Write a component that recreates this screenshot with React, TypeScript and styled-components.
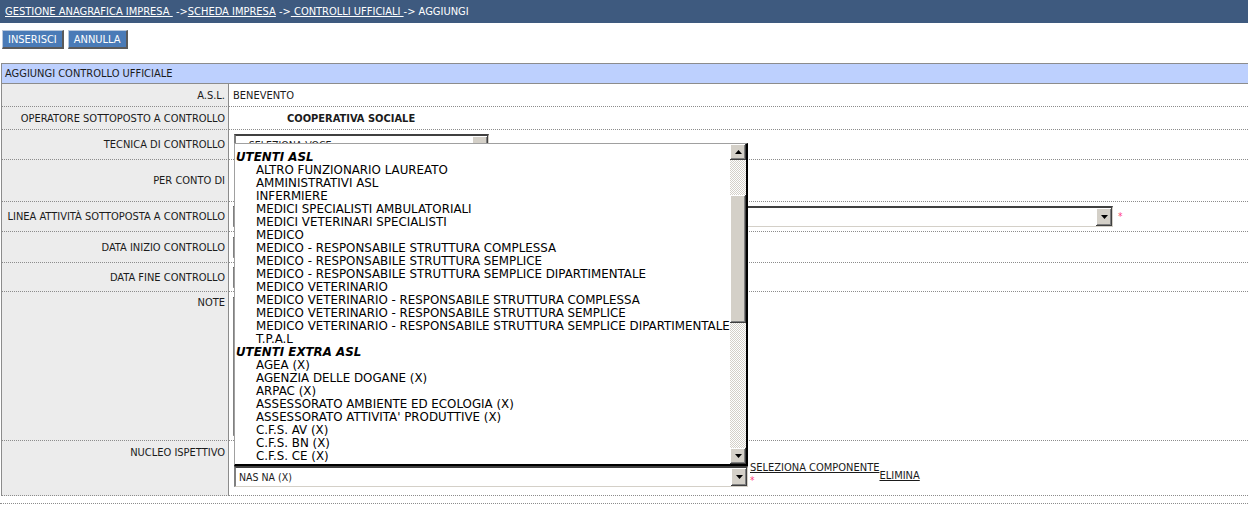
import React from "react";
import styled, { createGlobalStyle } from "styled-components";

const UI = `"DejaVu Sans Condensed", "DejaVu Sans", sans-serif`;
const LIST = `"DejaVu Sans", Verdana, sans-serif`;

const Global = createGlobalStyle`
  html, body { margin: 0; padding: 0; background: #fff; }
  body {
    font-family: ${UI};
    font-size: 11px;
    color: #1b1b1b;
    width: 1248px;
    overflow: hidden;
  }
`;

const TopBar = styled.div`
  height: 23px;
  line-height: 23px;
  background: #3e5a7f;
  color: #fff;
  padding-left: 5px;
  white-space: pre;
`;

const Crumb = styled.a`
  color: #fff;
  text-decoration: underline;
`;

const ButtonBar = styled.div`
  display: flex;
  gap: 4px;
  padding: 7px 0 14px 2px;
`;

const Btn = styled.button`
  box-sizing: border-box;
  height: 19px;
  padding: 0 5px;
  background: #4a7bb7;
  color: #fff;
  font: 11px ${UI};
  border-style: solid;
  border-width: 1px 2px 2px 1px;
  border-color: #b8c8dc #5a5a5a #5a5a5a #b8c8dc;
`;

const Form = styled.div`
  display: grid;
  grid-template-columns: 227px 1fr;
  margin-left: 1px;
  border-left: 1px solid #8c8c8c;
`;

const Header = styled.div`
  grid-column: 1 / -1;
  height: 19px;
  line-height: 20px;
  background: #bdd0fe;
  border-top: 1px solid #8c8c8c;
  border-bottom: 1px solid #8c8c8c;
  padding-left: 3px;
`;

const Label = styled.div<{ $h: number; $top?: number }>`
  box-sizing: border-box;
  height: ${(p) => p.$h}px;
  background: #ececec;
  border-right: 1px solid #8c8c8c;
  border-bottom: 1px dotted #8c8c8c;
  display: flex;
  justify-content: flex-end;
  align-items: ${(p) => (p.$top != null ? "flex-start" : "center")};
  padding: ${(p) => p.$top ?? 0}px 3px 0 0;
  line-height: 13px;
  white-space: nowrap;
`;

const Value = styled.div<{ $h: number; $pl?: number; $top?: number }>`
  box-sizing: border-box;
  height: ${(p) => p.$h}px;
  border-bottom: 1px dotted #8c8c8c;
  display: flex;
  align-items: ${(p) => (p.$top != null ? "flex-start" : "center")};
  padding: ${(p) => p.$top ?? 0}px 0 0 ${(p) => p.$pl ?? 4}px;
  line-height: 13px;
  white-space: nowrap;
`;

const Strong = styled.span`
  font-weight: bold;
`;

const Tail = styled.div`
  height: 7px;
  border-bottom: 1px dotted #8c8c8c;
`;

const Combo = styled.div<{ $w: number; $h?: number }>`
  box-sizing: border-box;
  width: ${(p) => p.$w}px;
  height: ${(p) => p.$h ?? 21}px;
  background: #fff;
  border-style: solid;
  border-width: 2px 1px 1px 2px;
  border-color: #404040 #d4d0c8 #d4d0c8 #808080;
  display: flex;
  align-items: stretch;
  font-size: 10.5px;
`;

const ComboText = styled.span`
  flex: 1;
  padding-left: 3px;
  display: flex;
  align-items: center;
  overflow: hidden;
`;

const ArrowBtn = styled.div`
  width: 16px;
  flex: none;
  background: #d4d0c8;
  box-shadow: inset -1px -1px #404040, inset 1px 1px #fff, inset -2px -2px #808080;
  display: flex;
  align-items: center;
  justify-content: center;
`;

const Req = styled.span<{ $ml?: number }>`
  color: #ff3f7a;
  font-size: 10px;
  margin-left: ${(p) => p.$ml ?? 0}px;
`;

const Field = styled.input<{ $w: number }>`
  box-sizing: border-box;
  width: ${(p) => p.$w}px;
  height: 21px;
  margin: 0;
  padding: 0 3px;
  background: #fff;
  border-style: solid;
  border-width: 2px 1px 1px 2px;
  border-color: #404040 #d4d0c8 #d4d0c8 #808080;
  font: 10px ${UI};
`;

const Notes = styled.textarea`
  box-sizing: border-box;
  width: 420px;
  height: 139px;
  margin: 0;
  resize: none;
  border-style: solid;
  border-width: 2px 1px 1px 2px;
  border-color: #404040 #d4d0c8 #d4d0c8 #808080;
`;

const NucleoWrap = styled.div`
  display: flex;
  align-items: flex-start;
`;

const ComboAnchor = styled.div`
  position: relative;
  margin-top: 5px;
`;

const LinkStack = styled.div`
  display: flex;
  flex-direction: column;
  padding-left: 2px;
`;

const Link = styled.a<{ $mt?: number }>`
  color: #1b1b1b;
  text-decoration: underline;
  margin-top: ${(p) => p.$mt ?? 0}px;
  line-height: 13px;
`;

const DropList = styled.div`
  position: absolute;
  left: 0;
  bottom: 100%;
  width: 514px;
  height: 323px;
  box-sizing: border-box;
  background: #fff;
  border-style: solid;
  border-width: 1px 2px 2px 1px;
  border-color: #a0a0a0 #000 #000 #a0a0a0;
  display: flex;
  z-index: 5;
`;

const ListBody = styled.div`
  flex: 1;
  overflow: hidden;
  padding-top: 7px;
  font-family: ${LIST};
  font-size: 11.85px;
  line-height: 13px;
  white-space: nowrap;
  color: #000;
`;

const Group = styled.div`
  font-weight: bold;
  font-style: italic;
  padding-left: 1px;
`;

const Option = styled.div`
  padding-left: 21px;
`;

const ScrollBar = styled.div`
  width: 16px;
  flex: none;
  display: flex;
  flex-direction: column;
`;

const ScrollBtn = styled.div`
  height: 16px;
  flex: none;
  background: #d4d0c8;
  box-shadow: inset -1px -1px #404040, inset 1px 1px #fff, inset -2px -2px #808080;
  display: flex;
  align-items: center;
  justify-content: center;
`;

const Track = styled.div`
  flex: 1;
  display: flex;
  flex-direction: column;
  background: repeating-conic-gradient(#fff 0 25%, #d4d0c8 0 50%) 0 0 / 2px 2px;
`;

const Thumb = styled.div<{ $top: number; $h: number }>`
  margin-top: ${(p) => p.$top}px;
  height: ${(p) => p.$h}px;
  background: #d4d0c8;
  box-shadow: inset -1px -1px #404040, inset 1px 1px #fff, inset -2px -2px #808080;
`;

const Arrow = ({ up }: { up?: boolean }) => (
  <svg width="7" height="4" viewBox="0 0 7 4">
    <polygon points={up ? "0,4 7,4 3.5,0" : "0,0 7,0 3.5,4"} fill="#000" />
  </svg>
);

const groups: { title: string; items: string[] }[] = [
  {
    title: "UTENTI ASL",
    items: [
      "ALTRO FUNZIONARIO LAUREATO",
      "AMMINISTRATIVI ASL",
      "INFERMIERE",
      "MEDICI SPECIALISTI AMBULATORIALI",
      "MEDICI VETERINARI SPECIALISTI",
      "MEDICO",
      "MEDICO - RESPONSABILE STRUTTURA COMPLESSA",
      "MEDICO - RESPONSABILE STRUTTURA SEMPLICE",
      "MEDICO - RESPONSABILE STRUTTURA SEMPLICE DIPARTIMENTALE",
      "MEDICO VETERINARIO",
      "MEDICO VETERINARIO - RESPONSABILE STRUTTURA COMPLESSA",
      "MEDICO VETERINARIO - RESPONSABILE STRUTTURA SEMPLICE",
      "MEDICO VETERINARIO - RESPONSABILE STRUTTURA SEMPLICE DIPARTIMENTALE",
      "T.P.A.L",
    ],
  },
  {
    title: "UTENTI EXTRA ASL",
    items: [
      "AGEA (X)",
      "AGENZIA DELLE DOGANE (X)",
      "ARPAC (X)",
      "ASSESSORATO AMBIENTE ED ECOLOGIA (X)",
      "ASSESSORATO ATTIVITA' PRODUTTIVE (X)",
      "C.F.S. AV (X)",
      "C.F.S. BN (X)",
      "C.F.S. CE (X)",
    ],
  },
];

export default function App() {
  return (
    <>
      <Global />
      <TopBar>
        <Crumb>GESTIONE ANAGRAFICA IMPRESA </Crumb>
        {" ->"}
        <Crumb>SCHEDA IMPRESA</Crumb>
        {" ->"}
        <Crumb> CONTROLLI UFFICIALI </Crumb>
        {"-> AGGIUNGI"}
      </TopBar>
      <ButtonBar>
        <Btn>INSERISCI</Btn>
        <Btn>ANNULLA</Btn>
      </ButtonBar>
      <Form>
        <Header>AGGIUNGI CONTROLLO UFFICIALE</Header>

        <Label $h={23}>A.S.L.</Label>
        <Value $h={23}>BENEVENTO</Value>

        <Label $h={23}>OPERATORE SOTTOPOSTO A CONTROLLO</Label>
        <Value $h={23} $pl={58}>
          <Strong>COOPERATIVA SOCIALE</Strong>
        </Value>

        <Label $h={30}>TECNICA DI CONTROLLO</Label>
        <Value $h={30} $pl={5}>
          <Combo $w={255} $h={22}>
            <ComboText>-- SELEZIONA VOCE --</ComboText>
            <ArrowBtn>
              <Arrow />
            </ArrowBtn>
          </Combo>
        </Value>

        <Label $h={42}>PER CONTO DI</Label>
        <Value $h={42} />

        <Label $h={30}>LINEA ATTIVITÀ SOTTOPOSTA A CONTROLLO</Label>
        <Value $h={30}>
          <Combo $w={880}>
            <ComboText />
            <ArrowBtn>
              <Arrow />
            </ArrowBtn>
          </Combo>
          <Req $ml={5}>*</Req>
        </Value>

        <Label $h={31}>DATA INIZIO CONTROLLO</Label>
        <Value $h={31}>
          <Field $w={120} readOnly />
        </Value>

        <Label $h={29}>DATA FINE CONTROLLO</Label>
        <Value $h={29}>
          <Field $w={120} readOnly />
        </Value>

        <Label $h={149} $top={4}>
          NOTE
        </Label>
        <Value $h={149} $top={5}>
          <Notes readOnly />
        </Value>

        <Label $h={55} $top={5}>
          NUCLEO ISPETTIVO
        </Label>
        <Value $h={55} $top={20} $pl={5}>
          <NucleoWrap>
            <ComboAnchor>
              <Combo $w={514}>
                <ComboText>NAS NA (X)</ComboText>
                <ArrowBtn>
                  <Arrow />
                </ArrowBtn>
              </Combo>
              <DropList>
                <ListBody>
                  {groups.map((g) => (
                    <React.Fragment key={g.title}>
                      <Group>{g.title}</Group>
                      {g.items.map((it) => (
                        <Option key={it}>{it}</Option>
                      ))}
                    </React.Fragment>
                  ))}
                </ListBody>
                <ScrollBar>
                  <ScrollBtn>
                    <Arrow up />
                  </ScrollBtn>
                  <Track>
                    <Thumb $top={35} $h={128} />
                  </Track>
                  <ScrollBtn>
                    <Arrow />
                  </ScrollBtn>
                </ScrollBar>
              </DropList>
            </ComboAnchor>
            <LinkStack>
              <Link>SELEZIONA COMPONENTE</Link>
              <Req>*</Req>
            </LinkStack>
            <Link $mt={8}>ELIMINA</Link>
          </NucleoWrap>
        </Value>
      </Form>
      <Tail />
    </>
  );
}
